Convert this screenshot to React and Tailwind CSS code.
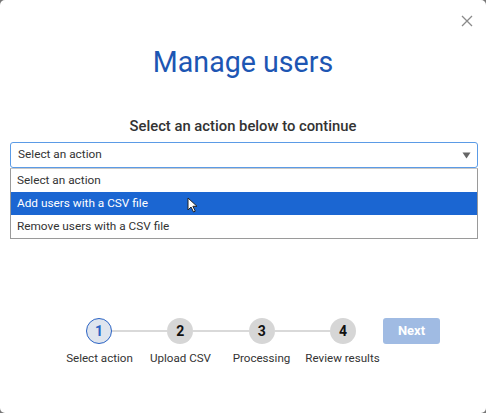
export default function App() {
  const steps = ["Select action", "Upload CSV", "Processing", "Review results"];
  return (
    <div className="w-[486px] h-[413px] bg-[#777777]" style={{ fontFamily: 'Roboto, sans-serif' }}>
      <div className="relative w-full h-full bg-white rounded-[5px] flex flex-col">
        <button className="absolute top-[14px] right-[12px] text-[#8a8a8a]">
          <svg width="14" height="14" viewBox="0 0 14 14" fill="none" stroke="currentColor" strokeWidth="1.3">
            <path d="M2 2 L12 12 M12 2 L2 12" />
          </svg>
        </button>
        <h1 className="mt-[40px] text-center text-[28.6px] leading-[44px] text-[#1d56b3]">Manage users</h1>
        <p className="mt-[31px] text-center text-[14.8px] leading-[22px] font-medium text-[#333333]">Select an action below to continue</p>
        <div className="ml-[10px] mr-[8px] mt-[5px]">
          <div className="h-[26px] border border-[#5b9be6] rounded-[3px] flex items-center justify-between pl-[7px] pr-[6px] text-[11.8px] text-[#333333]">
            <span>Select an action</span>
            <svg width="9" height="7" viewBox="0 0 9 7"><path d="M0.5 0.5 H8.5 L4.5 6.5 Z" fill="#666666" /></svg>
          </div>
          <div className="border border-[#9a9a9a] border-t-[#c8c8c8] text-[11.8px] text-[#333333]">
            <div className="h-[23px] flex items-center pl-[6px]">Select an action</div>
            <div className="h-[23px] flex items-center pl-[6px] bg-[#1b66d2] text-white relative">
              Add users with a CSV file
              <svg className="absolute left-[176px] top-[5px]" width="11" height="16" viewBox="0 0 11 16">
                <path d="M1 1 L1 13 L4 10 L6.5 15 L8.3 14.2 L5.9 9.3 L10 9.3 Z" fill="#ffffff" stroke="#222222" strokeWidth="1" strokeLinejoin="round" />
              </svg>
            </div>
            <div className="h-[23px] flex items-center pl-[6px]">Remove users with a CSV file</div>
          </div>
        </div>
        <div className="mt-[79px] flex items-start">
          <div className="ml-[59px] w-[324px] flex flex-col">
            <div className="flex items-center px-[27px]">
              {steps.map((s, i) => (
                <div key={s} className={i < 3 ? "flex items-center flex-1" : "flex items-center"}>
                  <div
                    className={
                      i === 0
                        ? "w-[26px] h-[26px] rounded-full bg-[#dfe5ee] border-[1.5px] border-[#2a63c4] flex items-center justify-center text-[14px] font-bold text-[#2a63c4]"
                        : "w-[26px] h-[26px] rounded-full bg-[#d6d6d6] flex items-center justify-center text-[14px] font-bold text-[#111111]"
                    }
                  >
                    {i + 1}
                  </div>
                  {i < 3 && <div className="flex-1 h-[2px] bg-[#d9d9d9]" />}
                </div>
              ))}
            </div>
            <div className="flex mt-[6px]">
              {steps.map((s) => (
                <div key={s} className="w-[81px] text-center text-[11.6px] leading-[16px] text-[#333333] whitespace-nowrap">{s}</div>
              ))}
            </div>
          </div>
          <button className="w-[57px] h-[26px] rounded-[3px] bg-[#a0bbe3] text-white text-[13px] font-bold">Next</button>
        </div>
      </div>
    </div>
  );
}
